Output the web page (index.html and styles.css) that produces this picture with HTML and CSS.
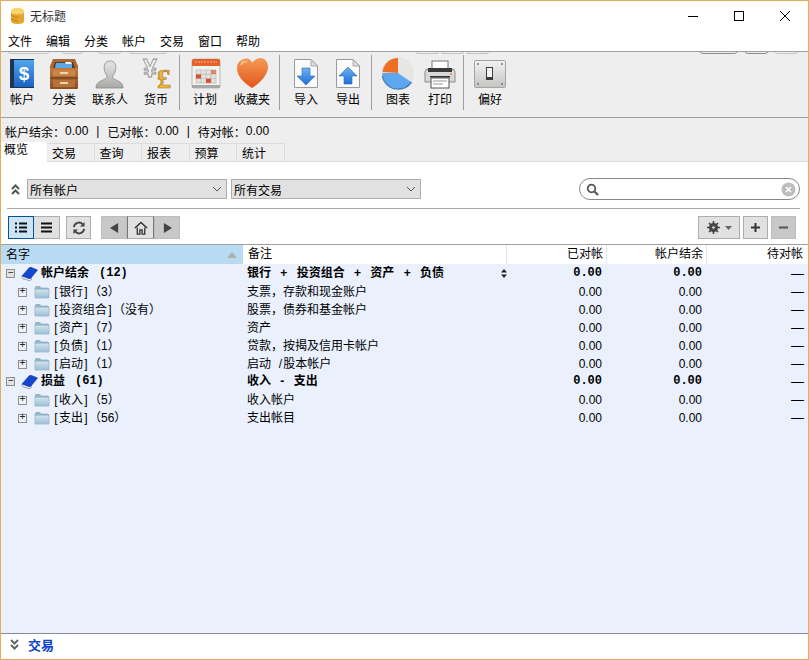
FILE: index.html
```html
<!DOCTYPE html>
<html lang="zh-CN">
<head>
  <meta charset="UTF-8" />
  <title>无标题</title>
  <link rel="stylesheet" href="styles.css">
</head>
<body>

  <svg class="defs" width="0" height="0" aria-hidden="true">
    <defs>
      <linearGradient id="g-blue" x1="0" y1="0" x2="0" y2="1"><stop offset="0" stop-color="#4fa3ee"/><stop offset="1" stop-color="#1c62c0"/></linearGradient>
      <linearGradient id="g-wood" x1="0" y1="0" x2="0" y2="1"><stop offset="0" stop-color="#c8783a"/><stop offset="1" stop-color="#8a4f22"/></linearGradient>
      <linearGradient id="g-bust" x1="0" y1="0" x2="0" y2="1"><stop offset="0" stop-color="#e6e6e4"/><stop offset="1" stop-color="#a8a8a6"/></linearGradient>
      <linearGradient id="g-heart" x1="0" y1="0" x2="0" y2="1"><stop offset="0" stop-color="#f59a55"/><stop offset="1" stop-color="#e2561a"/></linearGradient>
      <linearGradient id="g-arrow" x1="0" y1="0" x2="0" y2="1"><stop offset="0" stop-color="#6db2f2"/><stop offset="1" stop-color="#1f6fd6"/></linearGradient>
      <linearGradient id="g-plate" x1="0" y1="0" x2="0" y2="1"><stop offset="0" stop-color="#f2f2f0"/><stop offset="1" stop-color="#c4c4c2"/></linearGradient>
      <linearGradient id="g-folder" x1="0" y1="0" x2="0" y2="1"><stop offset="0" stop-color="#d2e3ee"/><stop offset="1" stop-color="#9cc0d6"/></linearGradient>
      <symbol id="i-folder" viewBox="0 0 16 14">
        <path d="M1 3.500 L1.800 1.500 H6 L7 3 H14 L15 4 V13 H1 Z" fill="#94b6cb" stroke="#88aac0" stroke-width=".7"/>
        <rect x="1.300" y="4.600" width="13.400" height="8.200" fill="url(#g-folder)"/>
      </symbol>
      <symbol id="i-book" viewBox="0 0 17 14">
        <path d="M1 9 Q.2 11 2 11.800 L8 13.500 Q9.500 13.800 10.500 12.500 L10 11" fill="#f4f6fa" stroke="#6c7fa8" stroke-width=".7"/>
        <path d="M1 9 L8 1 Q9 0 10.500 .5 L16.500 3 L10 11 Q9 12 7.500 11.500 Z" fill="#1447d0" stroke="#0f2f8c" stroke-width=".6"/>
      </symbol>
      <symbol id="i-doc" viewBox="0 0 36 34">
        <path d="M6.500 2.500 H23 L29.500 9 V30.500 H6.500 Z" fill="#fbfbfb" stroke="#9a9a9a"/>
        <path d="M23 2.500 V9 H29.500 Z" fill="#dcdcdc" stroke="#a8a8a8"/>
      </symbol>
    </defs>
  </svg>

  <div class="window">
    <div class="titlebar">
      <svg class="app-icon" width="15" height="18" viewBox="0 0 15 18">
        <ellipse cx="7.500" cy="4" rx="6.500" ry="3.300" fill="#f8d468"/>
        <path d="M1 4 V14 Q1 17 7.500 17 Q14 17 14 14 V4 Q14 7.300 7.500 7.300 Q1 7.300 1 4 Z" fill="#e5a52c"/>
        <path d="M1 8 Q4 10.500 8 10.500 M1 11.500 Q4 14 8 14" stroke="#b97a14" stroke-width=".8" fill="none"/>
      </svg>
      <span class="title">无标题</span>
      <div class="win-controls">
        <div class="win-btn"><svg width="10" height="10" viewBox="0 0 10 10"><path d="M0 5.500 H10" stroke="#000"/></svg></div>
        <div class="win-btn"><svg width="10" height="10" viewBox="0 0 10 10"><rect x=".5" y=".5" width="9" height="9" fill="none" stroke="#000"/></svg></div>
        <div class="win-btn"><svg width="10" height="10" viewBox="0 0 10 10"><path d="M0 0 L10 10 M10 0 L0 10" stroke="#000" stroke-width="1"/></svg></div>
      </div>
    </div>

    <div class="menubar">
      <span>文件</span><span>编辑</span><span>分类</span><span>帐户</span><span>交易</span><span>窗口</span><span>帮助</span>
    </div>

    <div class="toolbar">
      
      <svg class="tab-edges" width="807" height="3" viewBox="0 0 807 3">
        <path d="M7 0 Q8 1.500 10 1.500 H45 Q47 1.500 48 0 M61 0 Q62 1.500 64 1.500 H79 Q81 1.500 82 0 M97 0 Q98 1.500 100 1.500 H117 Q119 1.500 120 0 M128 0 Q129 1.500 131 1.500 H163 Q165 1.500 166 0 M416 0 V1.500 H437 V0 M441 0 V1.500 H462 V0 M466 0 V1.500 H487 V0" fill="none" stroke="#c4c4c4"/>
        <path d="M699 0 Q700 1.500 702 1.500 H733 Q735 1.500 736 0 M744 0 Q745 1.500 747 1.500 H764 Q766 1.500 767 0" fill="none" stroke="#8c8c8c"/>
        <path d="M774 0 Q775 1.500 777 1.500 H794 Q796 1.500 797 0" fill="none" stroke="#c4c4c4"/>
      </svg>
      <div class="tool">
        <svg width="36" height="34" viewBox="0 0 36 34">
          <rect x="6" y="2" width="24" height="29" fill="#1d3550"/>
          <rect x="10" y="3" width="20" height="27" fill="url(#g-blue)"/>
          <text x="20" y="23" class="ico-dollar">$</text>
        </svg>
        <span>帐户</span>
      </div>
      <div class="tool">
        <svg width="36" height="34" viewBox="0 0 36 34">
          <path d="M7 2 H29 L32 9 V13 H4 V9 Z" fill="#a9683a"/>
          <path d="M9 5 H27 L29 11 H7 Z" fill="#5a3a20"/>
          <path d="M10 6 H24 L26 7 V11 H9 Z" fill="#5aa9e6"/>
          <path d="M19 5 H25 L26 7 H20 Z" fill="#f2f2f2"/>
          <rect x="4" y="11" width="28" height="21" rx="1" fill="url(#g-wood)"/>
          <path d="M4 21 H32" stroke="#5e3618"/>
          <rect x="7" y="13" width="22" height="6" fill="#c9854a"/>
          <rect x="7" y="23" width="22" height="7" fill="#b87238"/>
          <rect x="14" y="15" width="8" height="2" fill="#f0d6a8"/>
          <rect x="14" y="25" width="8" height="2" fill="#f0d6a8"/>
        </svg>
        <span>分类</span>
      </div>
      <div class="tool wide">
        <svg width="36" height="34" viewBox="0 0 36 34">
          <path d="M18 4 C12.500 4 11.500 9 12.500 13 C13 16 14.500 18 15 19.500 C15 22 10 23 7 25 C5 26.500 4 28 4 31 H31 C31 28 30 26.500 28 25 C25 23 20.500 22 20.500 19.500 C21.500 18 23 16 23.500 13 C24.500 9 23.500 4 18 4 Z" fill="url(#g-bust)" stroke="#8c8c8a" stroke-width=".8"/>
        </svg>
        <span>联系人</span>
      </div>
      <div class="tool">
        <svg width="36" height="34" viewBox="0 0 36 34">
          <text x="12" y="20" class="ico-yen">¥</text>
          <text x="26" y="31" class="ico-pound">£</text>
        </svg>
        <span>货币</span>
      </div>
      <div class="tool-sep before-plan"></div>
      <div class="tool plan">
        <svg width="36" height="34" viewBox="0 0 36 34">
          <rect x="5" y="2" width="28" height="29" rx="2" fill="#f4f2ee" stroke="#b8b8b8"/>
          <path d="M5 4 Q5 2 7 2 H31 Q33 2 33 4 V9 H5 Z" fill="#e2622a"/>
          <path d="M8 5 H30" stroke="#f5b48e" stroke-dasharray="2 1"/>
          <path d="M9 13 H29 V26 H9 Z M9 17.300 H29 M9 21.600 H29 M14 13 V26 M19 13 V26 M24 13 V26" fill="#e4e2de" stroke="#bdbdbd" stroke-width=".8"/>
          <rect x="9" y="17.500" width="5" height="4" fill="#d9512a"/>
          <rect x="19" y="21.800" width="5" height="4" fill="#d9512a"/>
          <rect x="24" y="13" width="5" height="4" fill="#d98a6a"/>
          <rect x="5" y="28" width="28" height="3" fill="#a8a8a8"/>
        </svg>
        <span>计划</span>
      </div>
      <div class="tool fav">
        <svg width="36" height="34" viewBox="0 0 36 34">
          <path d="M18 31 C9 25 3 19 3 11 C3 5 8 1.500 12.500 1.500 C15 1.500 17 3 18.500 6 C20 3 23 1 26.500 1 C31 1 34 5 34 10 C34 18 26 26 18 31 Z" fill="url(#g-heart)"/>
          <path d="M7 8 C8 5 11 4 13 5" stroke="#fbc79c" stroke-width="1.500" fill="none"/>
        </svg>
        <span>收藏夹</span>
      </div>
      <div class="tool-sep after-fav"></div>
      <div class="tool">
        <svg width="36" height="34" viewBox="0 0 36 34">
          <use href="#i-doc"/>
          <path d="M14 11 H22 V19 H27 L18 28 L9 19 H14 Z" fill="url(#g-arrow)" stroke="#2a6cc0" stroke-width=".6"/>
        </svg>
        <span>导入</span>
      </div>
      <div class="tool">
        <svg width="36" height="34" viewBox="0 0 36 34">
          <use href="#i-doc"/>
          <path d="M14 27 H22 V19 H27 L18 10 L9 19 H14 Z" fill="url(#g-arrow)" stroke="#2a6cc0" stroke-width=".6"/>
        </svg>
        <span>导出</span>
      </div>
      <div class="tool-sep"></div>
      <div class="tool">
        <svg width="36" height="34" viewBox="0 0 36 34">
          <circle cx="18" cy="16" r="16" fill="#e6e6e4"/>
          <path d="M18 16 L18 1 A15.500 15.500 0 0 0 2.500 15 Z" fill="#ee6f24"/>
          <path d="M18 16 L2.200 16 A16 15 0 0 0 18 31.500 A16 16 0 0 0 31 25 Z" fill="#5ea6ee"/>
          <path d="M2.500 19 A16 15 0 0 0 18 32 A16 16 0 0 0 31.500 25" fill="none" stroke="#3f7fc4" stroke-width="1.400"/>
        </svg>
        <span>图表</span>
      </div>
      <div class="tool">
        <svg width="36" height="34" viewBox="0 0 36 34">
          <rect x="10" y="4" width="16" height="10" fill="#fff" stroke="#777"/>
          <path d="M3 15 Q3 12 6 12 H30 Q33 12 33 15 V25 H3 Z" fill="#d8d8d8" stroke="#8a8a8a"/>
          <rect x="6" y="11" width="24" height="4" fill="#3a3a3a"/>
          <circle cx="29" cy="17" r="1" fill="#e8862a"/>
          <rect x="9" y="21" width="18" height="10" fill="#fff" stroke="#555"/>
          <path d="M11 24 H25 M11 27 H21" stroke="#999"/>
          <rect x="8" y="19" width="20" height="1.500" fill="#333"/>
        </svg>
        <span>打印</span>
      </div>
      <div class="tool-sep"></div>
      <div class="tool">
        <svg width="36" height="34" viewBox="0 0 36 34">
          <rect x="2.500" y="3.500" width="31" height="27" rx="1" fill="url(#g-plate)" stroke="#a4a4a4"/>
          <rect x="14" y="10" width="7" height="13" fill="#3c3c3c"/>
          <rect x="15" y="11" width="5" height="9" fill="#f4f4f4"/>
          <circle cx="6" cy="7" r="1" fill="#777"/><circle cx="30" cy="7" r="1" fill="#777"/>
          <circle cx="6" cy="27" r="1" fill="#777"/><circle cx="30" cy="27" r="1" fill="#777"/>
        </svg>
        <span>偏好</span>
      </div>
    </div>

    <div class="summary">
      <span>帐户结余：</span><span>0.00</span><span class="pipe">|</span><span>已对帐：</span><span>0.00</span><span class="pipe">|</span><span>待对帐：</span><span>0.00</span>
    </div>

    <div class="tabs">
      <div class="tab active">概览</div>
      <div class="tab">交易</div>
      <div class="tab">查询</div>
      <div class="tab">报表</div>
      <div class="tab">预算</div>
      <div class="tab">统计</div>
    </div>

    <div class="filters">
      <svg class="chevrons" width="9" height="11" viewBox="0 0 9 11"><path d="M1 5 L4.500 1.500 L8 5 M1 10 L4.500 6.500 L8 10" fill="none" stroke="#555" stroke-width="2"/></svg>
      <div class="combo account-combo">所有帐户<svg width="10" height="6" viewBox="0 0 10 6"><path d="M1 1 L5 5 L9 1" fill="none" stroke="#555"/></svg></div>
      <div class="combo tx-combo">所有交易<svg width="10" height="6" viewBox="0 0 10 6"><path d="M1 1 L5 5 L9 1" fill="none" stroke="#555"/></svg></div>
      <div class="search">
        <svg width="13" height="13" viewBox="0 0 13 13"><circle cx="5.500" cy="5.500" r="3.800" fill="none" stroke="#555" stroke-width="1.800"/><path d="M8.500 8.500 L12 12" stroke="#555" stroke-width="2.200"/></svg>
        <svg class="clear" width="15" height="15" viewBox="0 0 15 15"><circle cx="7.500" cy="7.500" r="7" fill="#bdbdbd"/><path d="M5 5 L10 10 M10 5 L5 10" stroke="#fff" stroke-width="1.600"/></svg>
      </div>
    </div>
    <div class="rule"></div>

    <div class="actions">
      <div class="btn on first"><svg width="12" height="11" viewBox="0 0 12 11"><path d="M0 1.500 H2 M0 5.500 H2 M0 9.500 H2 M4 1.500 H12 M4 5.500 H12 M4 9.500 H12" stroke="#111" stroke-width="2"/></svg></div>
      <div class="btn second"><svg width="11" height="11" viewBox="0 0 11 11"><path d="M0 1.500 H11 M0 5.500 H11 M0 9.500 H11" stroke="#111" stroke-width="2"/></svg></div>
      <div class="btn refresh"><svg width="14" height="14" viewBox="0 0 15 15"><path d="M2 6.500 A5.500 5.500 0 0 1 11.500 3.500 M13 8.500 A5.500 5.500 0 0 1 3.500 11.500" fill="none" stroke="#444" stroke-width="2"/><path d="M13.500 1 V6 H8.500 Z M1.500 14 V9 H6.500 Z" fill="#444"/></svg></div>
      <div class="nav-group">
        <div class="btn off nav"><svg width="9" height="10" viewBox="0 0 10 11"><path d="M9 0 V11 L0 5.500 Z" fill="#444"/></svg></div>
        <div class="btn home"><svg width="14" height="14" viewBox="0 0 15 15"><path d="M1 7.500 L7.500 1.500 L14 7.500" fill="none" stroke="#333" stroke-width="1.600"/><path d="M3.500 7 V14 H6.300 V9.500 H8.700 V14 H11.500 V7" fill="none" stroke="#333" stroke-width="1.400"/></svg></div>
        <div class="btn off nav"><svg width="9" height="10" viewBox="0 0 10 11"><path d="M1 0 V11 L10 5.500 Z" fill="#444"/></svg></div>
      </div>
      <div class="btn gear">
        <svg width="13" height="13" viewBox="0 0 13 13"><circle cx="6.500" cy="6.500" r="3.300" fill="none" stroke="#444" stroke-width="2.600"/><path d="M6.500 0 V13 M0 6.500 H13 M2 2 L11 11 M11 2 L2 11" stroke="#444" stroke-width="1.600"/><circle cx="6.500" cy="6.500" r="1.300" fill="#e1e1e1"/></svg>
        <svg width="7" height="4" viewBox="0 0 7 4"><path d="M0 0 H7 L3.500 4 Z" fill="#666"/></svg>
      </div>
      <div class="btn small"><svg width="9" height="9" viewBox="0 0 9 9"><path d="M4.500 0 V9 M0 4.500 H9" stroke="#333" stroke-width="2"/></svg></div>
      <div class="btn small off"><svg width="9" height="9" viewBox="0 0 9 9"><path d="M0 4.500 H9" stroke="#555" stroke-width="2"/></svg></div>
    </div>

    <div class="table-head">
      <div class="th name-head">名字<svg width="10" height="6" viewBox="0 0 10 6"><path d="M0 6 L5 0 L10 6 Z" fill="#a9b3a8"/></svg></div>
      <div class="th note-head">备注</div>
      <div class="th num">已对帐</div>
      <div class="th num">帐户结余</div>
      <div class="th num last">待对帐</div>
    </div>

    <div class="tree">
      <div class="row root">
        <div class="name"><span class="toggle">−</span><svg class="book" width="17" height="14"><use href="#i-book"/></svg><span class="label">帐户结余</span><span class="count">(12)</span></div>
        <div class="note spaced">银行 + 投资组合 + 资产 + 负债<svg width="6" height="9" viewBox="0 0 6 9"><path d="M3 0 L6 3.500 H0 Z M3 9 L0 5.500 H6 Z" fill="#222"/></svg></div>
        <div class="val">0.00</div><div class="val">0.00</div><div class="val dash">—</div>
      </div>
      <div class="row">
        <div class="name"><span class="toggle">+</span><svg class="folder" width="16" height="14"><use href="#i-folder"/></svg><span class="br">[</span>银行<span class="br">]</span>（3）</div>
        <div class="note">支票，存款和现金账户</div>
        <div class="val">0.00</div><div class="val">0.00</div><div class="val dash">—</div>
      </div>
      <div class="row">
        <div class="name"><span class="toggle">+</span><svg class="folder" width="16" height="14"><use href="#i-folder"/></svg><span class="br">[</span>投资组合<span class="br">]</span>（没有）</div>
        <div class="note">股票，债券和基金帐户</div>
        <div class="val">0.00</div><div class="val">0.00</div><div class="val dash">—</div>
      </div>
      <div class="row">
        <div class="name"><span class="toggle">+</span><svg class="folder" width="16" height="14"><use href="#i-folder"/></svg><span class="br">[</span>资产<span class="br">]</span>（7）</div>
        <div class="note">资产</div>
        <div class="val">0.00</div><div class="val">0.00</div><div class="val dash">—</div>
      </div>
      <div class="row">
        <div class="name"><span class="toggle">+</span><svg class="folder" width="16" height="14"><use href="#i-folder"/></svg><span class="br">[</span>负债<span class="br">]</span>（1）</div>
        <div class="note">贷款，按揭及信用卡帐户</div>
        <div class="val">0.00</div><div class="val">0.00</div><div class="val dash">—</div>
      </div>
      <div class="row">
        <div class="name"><span class="toggle">+</span><svg class="folder" width="16" height="14"><use href="#i-folder"/></svg><span class="br">[</span>启动<span class="br">]</span>（1）</div>
        <div class="note"><span>启动 <span class="br">/</span>股本帐户</span></div>
        <div class="val">0.00</div><div class="val">0.00</div><div class="val dash">—</div>
      </div>
      <div class="row root">
        <div class="name"><span class="toggle">−</span><svg class="book" width="17" height="14"><use href="#i-book"/></svg><span class="label">损益</span><span class="count">(61)</span></div>
        <div class="note spaced">收入 - 支出</div>
        <div class="val">0.00</div><div class="val">0.00</div><div class="val dash">—</div>
      </div>
      <div class="row">
        <div class="name"><span class="toggle">+</span><svg class="folder" width="16" height="14"><use href="#i-folder"/></svg><span class="br">[</span>收入<span class="br">]</span>（5）</div>
        <div class="note">收入帐户</div>
        <div class="val">0.00</div><div class="val">0.00</div><div class="val dash">—</div>
      </div>
      <div class="row">
        <div class="name"><span class="toggle">+</span><svg class="folder" width="16" height="14"><use href="#i-folder"/></svg><span class="br">[</span>支出<span class="br">]</span>（56）</div>
        <div class="note">支出帐目</div>
        <div class="val">0.00</div><div class="val">0.00</div><div class="val dash">—</div>
      </div>
    </div>

    <div class="footer">
      <svg width="9" height="11" viewBox="0 0 9 11"><path d="M1 1 L4.500 4.500 L8 1 M1 6 L4.500 9.500 L8 6" fill="none" stroke="#666" stroke-width="2"/></svg>
      <span>交易</span>
    </div>
  </div>

</body>
</html>
```

FILE: styles.css
```css
* {
  box-sizing: border-box;
}

body {
  margin: 0;
  font-family: "Liberation Sans", "Noto Sans CJK SC", sans-serif;
  font-size: 12px;
  color: #000;
  background-color: white;
}

.defs {
  position: absolute;
}

.window {
  display: flex;
  flex-direction: column;
  width: 809px;
  height: 660px;
  border: 1px solid #e2ad5c;
  overflow: hidden;
}

.titlebar {
  display: flex;
  align-items: center;
  height: 29px;
  padding-left: 9px;
  flex-shrink: 0;
}

.title {
  margin-left: 5px;
  color: #333;
}

.win-controls {
  display: flex;
  margin-left: auto;
}

.win-btn {
  display: flex;
  align-items: center;
  justify-content: center;
  width: 46px;
  height: 29px;
}

.menubar {
  display: flex;
  gap: 14px;
  align-items: center;
  height: 21px;
  padding-left: 7px;
  flex-shrink: 0;
}

.toolbar {
  position: relative;
  display: flex;
  height: 67px;
  flex-shrink: 0;
  background-color: #eeeeee;
  border-top: 1px solid #a0a0a0;
  border-bottom: 1px solid #a0a0a0;
}

.tab-edges {
  position: absolute;
  top: 0;
  left: 0;
}

.tool {
  display: flex;
  flex-direction: column;
  align-items: center;
  width: 42px;
  padding-top: 5px;
}

.tool svg {
  display: block;
  overflow: visible;
}

.tool span {
  margin-top: 1px;
  line-height: 16px;
}

.tool.wide {
  width: 50px;
}

.tool.plan {
  width: 48px;
}

.tool.fav {
  width: 46px;
}

.tool-sep {
  width: 1px;
  height: 55px;
  margin: 3px 5px 0 2px;
  background-color: #a0a0a0;
}

.tool-sep.before-plan {
  margin-right: 1px;
}

.tool-sep.after-fav {
  margin-left: 4px;
}

.tool text {
  text-anchor: middle;
}

.ico-dollar {
  font-family: "Liberation Sans", sans-serif;
  font-weight: bold;
  font-size: 19px;
  fill: white;
}

.ico-yen {
  font-family: "Liberation Sans", sans-serif;
  font-weight: bold;
  font-size: 25px;
  fill: #f4f4f4;
  stroke: #8e8e8e;
  stroke-width: 0.8px;
}

.ico-pound {
  font-family: "Liberation Serif", serif;
  font-weight: bold;
  font-size: 28px;
  fill: #f2b63c;
  stroke: #a9761c;
  stroke-width: 0.7px;
}

.summary {
  display: flex;
  align-items: center;
  height: 24px;
  padding: 2px 0 0 4px;
  flex-shrink: 0;
  background-color: #eeeeee;
}

.pipe {
  width: 19px;
  text-align: center;
}

.tabs {
  display: flex;
  height: 20px;
  flex-shrink: 0;
  background-color: #eeeeee;
  border-bottom: 1px solid #dcdcdc;
}

.tab {
  width: 47.5px;
  margin-top: 1px;
  padding: 3px 0 0 5px;
  line-height: 15px;
  border: 1px solid #dcdcdc;
  border-left: none;
  border-bottom: none;
}

.tab.active {
  width: 46px;
  height: 20px;
  margin-top: 0;
  padding: 1px 0 0 3px;
  background-color: white;
  border: none;
}

.filters {
  display: flex;
  align-items: center;
  height: 38px;
  padding: 16px 8px 0 10px;
  flex-shrink: 0;
}

.chevrons {
  margin-right: 7px;
}

.combo {
  display: flex;
  align-items: center;
  justify-content: space-between;
  height: 20px;
  padding: 0 4px 0 2px;
  background-color: #e1e1e1;
  border: 1px solid #adadad;
}

.account-combo {
  width: 200px;
  margin-right: 4px;
}

.tx-combo {
  width: 190px;
}

.search {
  display: flex;
  align-items: center;
  justify-content: space-between;
  width: 221px;
  height: 22px;
  margin-left: auto;
  padding: 0 3px 0 6px;
  background-color: white;
  border: 1px solid #888;
  border-radius: 11px;
}

.rule {
  height: 1px;
  margin: 8px 8px 0 6px;
  flex-shrink: 0;
  background-color: #a8a8a8;
}

.actions {
  display: flex;
  align-items: stretch;
  height: 23px;
  margin: 7px 0 5px;
  padding: 0 12px 0 7px;
  flex-shrink: 0;
}

.btn {
  display: flex;
  align-items: center;
  justify-content: center;
  gap: 5px;
  background-color: #e1e1e1;
  border: 1px solid #adadad;
}

.btn.on {
  background-color: #cce4f7;
  border-color: #005499;
}

.btn.first {
  width: 26px;
}

.btn.second {
  width: 26px;
  border-left: none;
}

.btn.refresh {
  width: 25px;
  margin-left: 6px;
}

.nav-group {
  display: flex;
  margin-left: 10px;
}

.btn.off {
  background-color: #c8c8c8;
  border-color: #bdbdbd;
}

.btn.nav {
  width: 26px;
}

.btn.home {
  width: 27px;
  border-color: #777;
  border-top-color: #adadad;
  border-bottom-color: #adadad;
}

.btn.gear {
  width: 42px;
  margin-left: auto;
}

.btn.small {
  width: 25px;
  margin-left: 3px;
}

.table-head {
  display: grid;
  grid-template-columns: 242px 264px 100px 100px 1fr;
  height: 20px;
  flex-shrink: 0;
  border-top: 1px solid #a0a0a0;
}

.th {
  padding: 0 3px 0 5px;
  line-height: 18px;
  border-right: 1px solid #e5e5e5;
}

.name-head {
  display: flex;
  align-items: center;
  justify-content: space-between;
  padding-right: 6px;
  background-color: #b9daf3;
  border-right: none;
}

.th.num {
  text-align: right;
}

.th.last {
  padding-right: 5px;
  border-right: none;
}

.tree {
  flex: 1;
  background-color: #eaf1fd;
}

.row {
  display: grid;
  grid-template-columns: 242px 264px 100px 100px 1fr;
  height: 18px;
  padding-top: 2px;
  line-height: 16px;
}

.row.root {
  padding-top: 1px;
  line-height: 17px;
  font-weight: bold;
}

.name {
  display: flex;
  align-items: center;
  padding-left: 17px;
}

.root .name {
  padding-left: 5px;
}

.toggle {
  display: flex;
  align-items: center;
  justify-content: center;
  width: 9px;
  height: 9px;
  font-family: "Liberation Mono", monospace;
  font-size: 10px;
  font-weight: normal;
  color: #222;
  background-color: #eef1f6;
  border: 1px solid #8f8f8f;
}

.root .toggle {
  background-color: #e2e2e2;
}

.folder {
  margin: 0 3px 0 7px;
}

.book {
  margin: 0 3px 0 6px;
}

.br {
  display: inline-block;
  width: 6px;
  text-align: center;
}

.label {
  margin-right: 10px;
}

.count {
  font-family: "Liberation Mono", monospace;
  font-size: 12px;
}

.note {
  display: flex;
  align-items: center;
  justify-content: space-between;
  padding: 0 0 0 4px;
  white-space: pre;
  word-spacing: 3px;
}

.note.spaced {
  padding-right: 0;
  word-spacing: 6px;
}

.val {
  padding-right: 5px;
  text-align: right;
}

.root .val {
  font-family: "Liberation Mono", monospace;
}

.val.dash {
  padding-right: 4px;
  font-size: 13px;
  font-family: "Liberation Sans", sans-serif;
  font-weight: normal;
}

.footer {
  display: flex;
  align-items: center;
  gap: 9px;
  height: 26px;
  padding: 0 0 5px 9px;
  flex-shrink: 0;
  background-color: white;
  border-top: 1px solid #8a8a9a;
}

.footer span {
  font-size: 13px;
  font-weight: bold;
  color: #0d40c8;
}
```
